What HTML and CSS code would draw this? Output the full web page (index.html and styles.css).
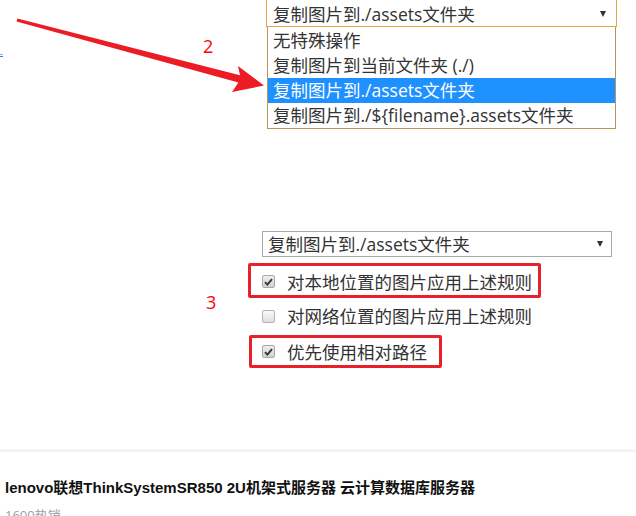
FILE: index.html
```html
<!DOCTYPE html>
<html lang="zh-CN">
<head>
<meta charset="utf-8">
<title>图片设置</title>
<link rel="stylesheet" href="styles.css">
</head>
<body>
<div class="page">
  <span class="link-frag"></span>

  <div class="select select-open">
    <span class="select-text">复制图片到./assets文件夹</span>
    <span class="caret"></span>
  </div>

  <ul class="dropdown">
    <li class="opt">无特殊操作</li>
    <li class="opt">复制图片到当前文件夹 (./)</li>
    <li class="opt opt-active">复制图片到./assets文件夹</li>
    <li class="opt">复制图片到./${filename}.assets文件夹</li>
  </ul>

  <svg class="arrow" width="280" height="100" viewBox="0 0 280 100">
    <polygon points="17.4,18.4 240,75.3 238,66 264,85.5 232,92 238.4,82.4 16.6,21.6" fill="#ec1c24"/>
  </svg>
  <span class="mark mark-2">2</span>

  <div class="settings">
    <div class="select">
      <span class="select-text">复制图片到./assets文件夹</span>
      <span class="caret"></span>
    </div>
    <div class="opts">
      <label class="row row-hl row-wide">
        <span class="cb cb-on"><svg width="9" height="8" viewBox="0 0 9 8"><path d="M1 4.2 L3.4 6.6 L8 1.2" fill="none" stroke="#333" stroke-width="1.9"/></svg></span>
        <span class="row-text">对本地位置的图片应用上述规则</span>
      </label>
      <label class="row row-mid">
        <span class="cb"></span>
        <span class="row-text">对网络位置的图片应用上述规则</span>
      </label>
      <label class="row row-hl row-short">
        <span class="cb cb-on"><svg width="9" height="8" viewBox="0 0 9 8"><path d="M1 4.2 L3.4 6.6 L8 1.2" fill="none" stroke="#333" stroke-width="1.9"/></svg></span>
        <span class="row-text">优先使用相对路径</span>
      </label>
    </div>
  </div>
  <span class="mark mark-3">3</span>

  <div class="divider"></div>

  <div class="product">
    <h2 class="product-title">lenovo联想ThinkSystemSR850 2U机架式服务器 云计算数据库服务器</h2>
    <div class="product-sales">1600热销</div>
  </div>
</div>
</body>
</html>
```

FILE: styles.css
```css
html, body {
  margin: 0;
  padding: 0;
  background: #ffffff;
  overflow: hidden;
}

body {
  font-family: "Open Sans", "Noto Sans CJK SC", sans-serif;
  color: #333333;
}

.page {
  position: relative;
  width: 636px;
  height: 516px;
  overflow: hidden;
}

.link-frag {
  position: absolute;
  left: 0;
  top: 54px;
  width: 3px;
  height: 3px;
  border-top: 1px solid #8ab4e0;
  border-bottom: 1px solid #3c7fd0;
  box-sizing: border-box;
}

.select {
  box-sizing: border-box;
  display: flex;
  align-items: center;
  justify-content: space-between;
  width: 350px;
  height: 26px;
  border: 1px solid #a9a9a9;
  background: #ffffff;
  padding: 0 8px 0 5px;
  font-size: 17.5px;
  color: #333333;
}

.select-text {
  line-height: 24px;
  white-space: nowrap;
}

.caret {
  width: 0;
  height: 0;
  border-left: 3.5px solid transparent;
  border-right: 3.5px solid transparent;
  border-top: 6px solid #333333;
}

.select-open {
  margin-top: -3px;
  margin-left: 266px;
  width: 351px;
  height: 30px;
  padding: 3px 10px 0 6px;
  border: 1px solid #e6a53e;
}

.dropdown {
  position: absolute;
  left: 267px;
  top: 27px;
  width: 349px;
  margin: 0;
  padding: 1px 0 0;
  list-style: none;
  box-sizing: border-box;
  border: 1px solid #b8955a;
  border-top: none;
  background: #ffffff;
  z-index: 2;
}

.opt {
  height: 25px;
  line-height: 25px;
  padding-left: 5px;
  font-size: 17.5px;
  color: #333333;
  white-space: nowrap;
}

.opt-active {
  background: #1e90ff;
  color: #ffffff;
}

.arrow {
  position: absolute;
  left: 0;
  top: 0;
  z-index: 3;
}

.mark {
  position: absolute;
  font-family: "Open Sans", sans-serif;
  font-size: 18px;
  line-height: 20px;
  color: #ff0000;
}

.mark-2 {
  left: 203px;
  top: 36px;
}

.mark-3 {
  left: 206px;
  top: 292px;
}

.settings {
  margin-top: 204px;
  margin-left: 262px;
}

.opts {
  display: flex;
  flex-direction: column;
  align-items: flex-start;
  margin-top: 6px;
  margin-left: -14px;
}

.row {
  box-sizing: border-box;
  display: inline-flex;
  align-items: center;
  height: 35px;
  padding-left: 11px;
  border: 3px solid transparent;
  border-radius: 2px;
  font-size: 17.5px;
  color: #333333;
}

.row-hl {
  border-color: #e8202a;
}

.row-wide {
  width: 293px;
  padding-top: 2px;
}

.row-mid {
  height: 36px;
}

.row-short {
  width: 193px;
  height: 33px;
  margin-top: 1px;
  margin-left: 1px;
  padding-left: 10px;
}

.cb {
  box-sizing: border-box;
  display: flex;
  align-items: center;
  justify-content: center;
  width: 13px;
  height: 13px;
  border: 1px solid #b4b4b4;
  border-radius: 2px;
  background: linear-gradient(#fbfbfb, #dedede);
  margin-right: 12px;
  flex: none;
}

.cb-on {
  background: linear-gradient(#eeeeee, #d2d2d2);
  border-color: #a8a8a8;
}

.row-text {
  white-space: nowrap;
  line-height: 24px;
}

.divider {
  margin-top: 81px;
  height: 3px;
  background: linear-gradient(#f7f7f7, #f0f0f0);
}

.product {
  padding-left: 5px;
}

.product-title {
  margin: 26px 0 0;
  font-family: "Liberation Sans", "Noto Sans CJK SC", sans-serif;
  font-size: 15px;
  font-weight: bold;
  line-height: 20px;
  color: #111111;
  white-space: nowrap;
}

.product-sales {
  margin-top: 9px;
  font-size: 13px;
  line-height: 16px;
  color: #a0a0a0;
}
```
